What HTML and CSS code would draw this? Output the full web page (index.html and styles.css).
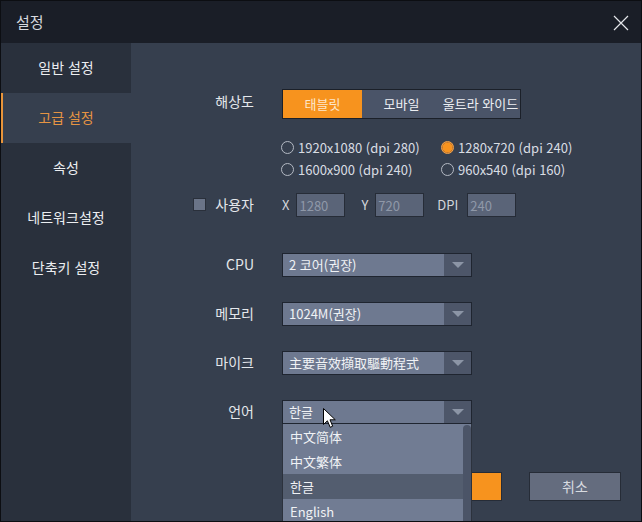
FILE: index.html
```html
<!DOCTYPE html>
<html lang="ko">
<head>
<meta charset="utf-8">
<title>설정</title>
<link rel="stylesheet" href="styles.css">
</head>
<body>
<div class="window">
  <header class="titlebar">
    <span class="title">설정</span>
    <span class="close">
      <svg width="16" height="16" viewBox="0 0 16 16"><path d="M1 1 L15 15 M15 1 L1 15" stroke="#e4e6ea" stroke-width="1.2" fill="none"/></svg>
    </span>
  </header>
  <div class="body">
    <nav class="sidebar">
      <div class="nav-item">일반 설정</div>
      <div class="nav-item active">고급 설정</div>
      <div class="nav-item">속성</div>
      <div class="nav-item">네트워크설정</div>
      <div class="nav-item">단축키 설정</div>
    </nav>
    <main class="main">
      <div class="row row-res">
        <div class="label">해상도</div>
        <div class="seg">
          <span class="seg-btn on">태블릿</span>
          <span class="seg-btn">모바일</span>
          <span class="seg-btn">울트라 와이드</span>
        </div>
      </div>
      <div class="radios">
        <label class="radio"><span class="dot"></span>1920x1080 (dpi 280)</label>
        <label class="radio"><span class="dot on"></span>1280x720 (dpi 240)</label>
        <label class="radio"><span class="dot"></span>1600x900 (dpi 240)</label>
        <label class="radio"><span class="dot"></span>960x540 (dpi 160)</label>
      </div>
      <div class="row row-custom">
        <div class="label"><span class="check"></span>사용자</div>
        <div class="custom">
          <span class="k">X</span><span class="inp">1280</span>
          <span class="k k-y">Y</span><span class="inp">720</span>
          <span class="k k-dpi">DPI</span><span class="inp">240</span>
        </div>
      </div>
      <div class="row row-sel row-first">
        <div class="label">CPU</div>
        <div class="select"><span class="val">2 코어(권장)</span><span class="arrow"></span></div>
      </div>
      <div class="row row-sel">
        <div class="label">메모리</div>
        <div class="select"><span class="val">1024M(권장)</span><span class="arrow"></span></div>
      </div>
      <div class="row row-sel">
        <div class="label">마이크</div>
        <div class="select"><span class="val">主要音效擷取驅動程式</span><span class="arrow"></span></div>
      </div>
      <div class="row row-sel">
        <div class="label">언어</div>
        <div class="select"><span class="val">한글</span><span class="arrow"></span></div>
      </div>
      <div class="actions">
        <button class="btn ok">확인</button>
        <button class="btn cancel">취소</button>
      </div>
      <ul class="dropdown">
        <li>中文简体</li>
        <li>中文繁体</li>
        <li class="hl">한글</li>
        <li>English</li>
      </ul>
      <span class="scroll-thumb"></span>
      <svg class="cursor" width="14" height="21" viewBox="0 0 14 21"><path d="M0.5 0.5 L0.5 16.5 L4.4 12.8 L7.2 19.3 L9.7 18.2 L7 11.8 L12.3 11.8 Z" fill="#ffffff" stroke="#000000" stroke-width="1"/></svg>
    </main>
  </div>
</div>
</body>
</html>
```
FILE: styles.css
```css
* { box-sizing: border-box; }
html, body { margin: 0; padding: 0; background: #0e1116; }
body {
  font-family: "Noto Sans CJK KR", "Noto Sans", sans-serif;
  color: #e4e7eb;
}
.window {
  width: 642px;
  height: 522px;
  border: 1px solid #0c0e12;
  display: flex;
  flex-direction: column;
  background: #363f4e;
  overflow: hidden;
}
.titlebar {
  height: 42px;
  flex: none;
  background: #1a1e27;
  display: flex;
  align-items: center;
  justify-content: space-between;
  padding: 0 12px 0 15px;
}
.title { font-size: 15px; color: #d6d9de; line-height: 1; margin-top: -1px; }
.close { width: 16px; height: 16px; display: block; margin-top: 1px; }
.close svg { display: block; }

.body { flex: 1; display: flex; min-height: 0; }
.sidebar {
  width: 130px;
  flex: none;
  background: #29303c;
}
.nav-item {
  height: 50px;
  display: flex;
  align-items: center;
  justify-content: center;
  font-size: 14px;
  color: #eceef1;
  padding-bottom: 3px;
}
.nav-item.active {
  background: #363f4e;
  color: #e59443;
  border-left: 2px solid #e8943a;
  padding-right: 2px;
}

.main {
  flex: 1;
  position: relative;
  overflow: hidden;
  padding-top: 46px;
}
.row { display: flex; align-items: center; }
.label {
  width: 123px;
  flex: none;
  text-align: right;
  font-size: 14px;
  color: #e4e7eb;
  margin-right: 28px;
  display: flex;
  justify-content: flex-end;
  align-items: center;
  padding-bottom: 2px;
}
.row-res .label { margin-top: -4px; }
.seg {
  display: flex;
  height: 30px;
  border: 1px solid #1b2029;
  background: #4a5468;
}
.seg-btn {
  width: 79px;
  display: flex;
  align-items: center;
  justify-content: center;
  font-size: 13px;
  color: #eceef2;
  padding-bottom: 1px;
}
.seg-btn.on { background: #f7931e; color: #fde7cb; }

.radios {
  margin-top: 17px;
  padding-left: 150px;
  display: grid;
  grid-template-columns: 160px 160px;
  grid-auto-rows: 22px;
}
.radio {
  display: flex;
  align-items: center;
  font-size: 13px;
  color: #d9dde3;
}
.dot {
  width: 13px;
  height: 13px;
  border-radius: 50%;
  border: 1px solid #b4bac4;
  margin-right: 4px;
  flex: none;
}
.dot.on {
  border: 1px solid #f3a44a;
  background: radial-gradient(circle, #f7931e 0 4.5px, #c7782a 5px 100%);
}

.row-custom { margin-top: 13px; height: 24px; }
.row-custom .label { padding-bottom: 3px; }
.check {
  width: 13px;
  height: 13px;
  background: #6a7488;
  border: 1px solid #2a303b;
  margin-right: 9px;
  margin-top: 1px;
}
.custom { display: flex; align-items: center; }
.k { font-size: 13px; color: #d2d6dc; margin-right: 7px; padding-bottom: 2px; }
.k-y { margin-left: 16px; }
.k-dpi { margin-left: 13px; margin-right: 9px; }
.inp {
  width: 49px;
  height: 24px;
  background: #5a6478;
  border: 1px solid #262c37;
  font-size: 13px;
  color: #8f98a8;
  padding-left: 2px;
  display: flex;
  align-items: center;
}

.row-sel { margin-top: 25px; height: 24px; }
.row-first { margin-top: 36px; }
.select {
  width: 190px;
  height: 24px;
  border: 1px solid #1f2530;
  background: #6e7990;
  display: flex;
  align-items: stretch;
}
.val {
  flex: 1;
  font-size: 13px;
  color: #f0f2f5;
  padding-left: 6px;
  padding-bottom: 1px;
  display: flex;
  align-items: center;
}
.arrow {
  width: 27px;
  background: #4d5669;
  position: relative;
}
.arrow::after {
  content: "";
  position: absolute;
  left: 8px;
  top: 8px;
  border-left: 6px solid transparent;
  border-right: 6px solid transparent;
  border-top: 6px solid #8c95a6;
}

.actions {
  margin-top: 48px;
  display: flex;
  justify-content: flex-end;
  gap: 27px;
  padding-right: 20px;
}
.btn {
  width: 92px;
  height: 29px;
  border: 1px solid #262c37;
  font-family: inherit;
  font-size: 14px;
  padding: 0 0 2px 0;
}
.ok { background: #f7931e; color: #ffffff; }
.cancel { background: #646c7e; color: #d8dbe0; }

.dropdown {
  position: absolute;
  left: 151px;
  top: 381px;
  width: 190px;
  margin: 0;
  padding: 0;
  list-style: none;
  background: #717c93;
  border-left: 1px solid #2c323d;
  border-right: 1px solid #2c323d;
  padding-right: 8px;
}
.dropdown li {
  height: 25px;
  font-size: 13px;
  color: #f0f2f5;
  padding-left: 7px;
  padding-bottom: 1px;
  display: flex;
  align-items: center;
}
.dropdown li.hl { background: #535d6f; }
.scroll-thumb {
  position: absolute;
  left: 332px;
  top: 382px;
  width: 8px;
  height: 100px;
  background: #4b5467;
  border-radius: 4px 4px 0 0;
}
.cursor {
  position: absolute;
  left: 192px;
  top: 365px;
  display: block;
}
```
